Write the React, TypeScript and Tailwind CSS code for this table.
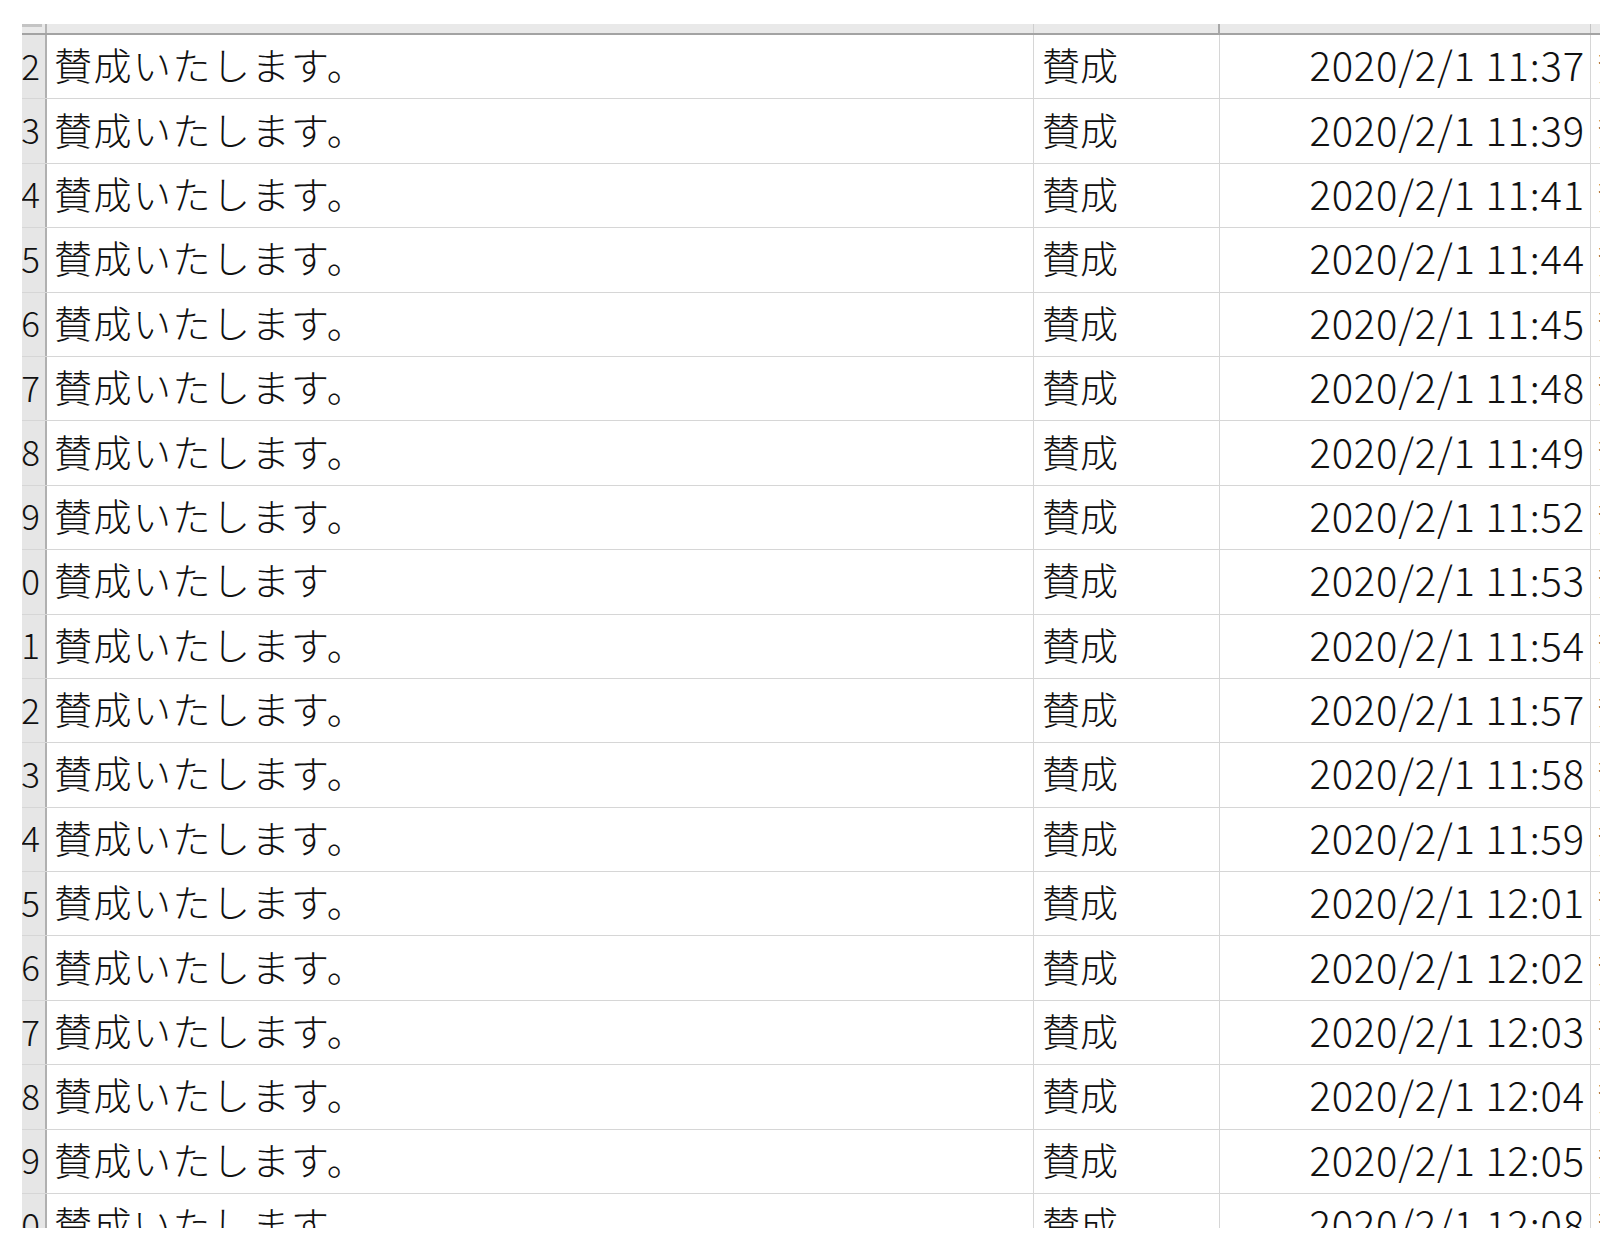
import React from "react";

const rows: { n: string; t: string; d: string }[] = [
  { n: "2", t: "賛成いたします。", d: "2020/2/1 11:37" },
  { n: "3", t: "賛成いたします。", d: "2020/2/1 11:39" },
  { n: "4", t: "賛成いたします。", d: "2020/2/1 11:41" },
  { n: "5", t: "賛成いたします。", d: "2020/2/1 11:44" },
  { n: "6", t: "賛成いたします。", d: "2020/2/1 11:45" },
  { n: "7", t: "賛成いたします。", d: "2020/2/1 11:48" },
  { n: "8", t: "賛成いたします。", d: "2020/2/1 11:49" },
  { n: "9", t: "賛成いたします。", d: "2020/2/1 11:52" },
  { n: "0", t: "賛成いたします", d: "2020/2/1 11:53" },
  { n: "1", t: "賛成いたします。", d: "2020/2/1 11:54" },
  { n: "2", t: "賛成いたします。", d: "2020/2/1 11:57" },
  { n: "3", t: "賛成いたします。", d: "2020/2/1 11:58" },
  { n: "4", t: "賛成いたします。", d: "2020/2/1 11:59" },
  { n: "5", t: "賛成いたします。", d: "2020/2/1 12:01" },
  { n: "6", t: "賛成いたします。", d: "2020/2/1 12:02" },
  { n: "7", t: "賛成いたします。", d: "2020/2/1 12:03" },
  { n: "8", t: "賛成いたします。", d: "2020/2/1 12:04" },
  { n: "9", t: "賛成いたします。", d: "2020/2/1 12:05" },
  { n: "0", t: "賛成いたします", d: "2020/2/1 12:08" },
];

export default function App() {
  return (
    <div className="w-[1600px] h-[1253px] bg-white overflow-hidden">
      <div
        className="ml-[22px] mt-[24px] w-[1578px] h-[1204px] overflow-hidden text-[#111]"
        style={{ fontFamily: '"Noto Sans CJK JP", "Noto Sans", sans-serif' }}
      >
        {/* column header strip */}
        <div className="flex h-[11px] bg-[#e9e9e9] border-b-2 border-[#a3a3a3]">
          <div className="w-[25px] shrink-0 border-r-2 border-[#b5b5b5] relative">
            <div className="absolute left-0 top-0 w-[20px] h-[3px] bg-[#c4c4c4]" />
          </div>
          <div className="w-[987px] shrink-0 border-r border-[#cfcfcf]" />
          <div className="w-[186px] shrink-0 border-r-2 border-[#a8a8a8]" />
          <div className="w-[371px] shrink-0 border-r border-[#c4c4c4]" />
          <div className="flex-1" />
        </div>
        {rows.map((r, i) => (
          <div key={i} className="flex h-[64.4px] border-b border-[#d6d6d6]">
            <div className="w-[25px] shrink-0 bg-[#e6e6e6] border-r-2 border-[#b0b0b0] flex items-center justify-end pr-[5px] pb-[5px]">
              <span className="text-[35px] leading-none font-light">{r.n}</span>
            </div>
            <div className="w-[987px] shrink-0 border-r border-[#d6d6d6] flex items-center pl-[7px] pb-[5px]">
              <span className="text-[38px] leading-none font-light whitespace-nowrap tracking-[1.5px]">{r.t}</span>
            </div>
            <div className="w-[186px] shrink-0 border-r border-[#d6d6d6] flex items-center pl-[8px] pb-[5px]">
              <span className="text-[38px] leading-none font-light whitespace-nowrap">賛成</span>
            </div>
            <div className="w-[371px] shrink-0 border-r border-[#d6d6d6] flex items-center justify-end pr-[5px] pb-[5px]">
              <span className="text-[40px] leading-none font-light whitespace-nowrap tracking-[0.8px]">{r.d}</span>
            </div>
            <div className="flex-1 flex items-center pl-[6px] overflow-hidden pb-[5px]">
              <span className="text-[38px] leading-none font-light whitespace-nowrap">賛成</span>
            </div>
          </div>
        ))}
      </div>
    </div>
  );
}
